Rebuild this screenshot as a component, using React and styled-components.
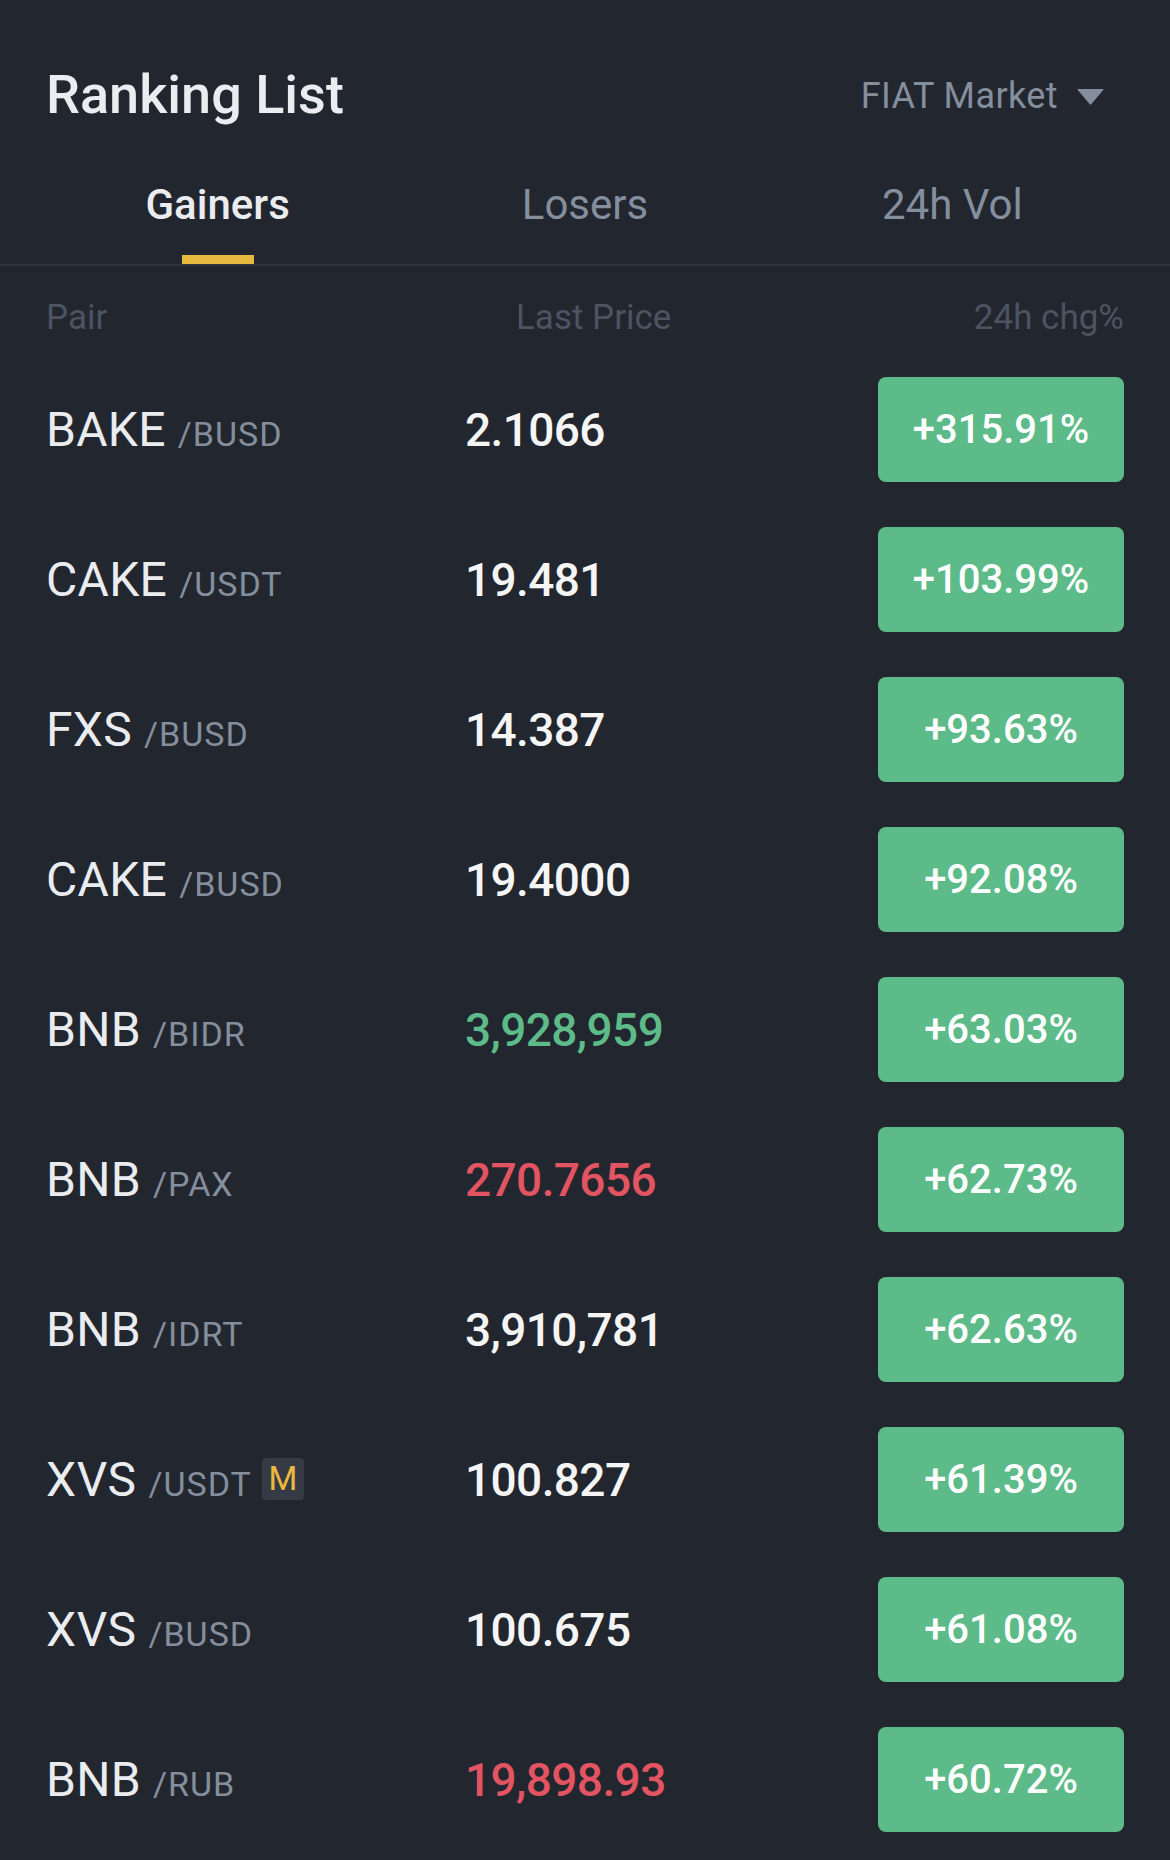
import React from 'react';
import styled, { createGlobalStyle } from 'styled-components';

const rows = [
    { base: 'BAKE', quote: 'BUSD', price: '2.1066', chg: '+315.91%' },
    { base: 'CAKE', quote: 'USDT', price: '19.481', chg: '+103.99%' },
    { base: 'FXS', quote: 'BUSD', price: '14.387', chg: '+93.63%' },
    { base: 'CAKE', quote: 'BUSD', price: '19.4000', chg: '+92.08%' },
    { base: 'BNB', quote: 'BIDR', price: '3,928,959', chg: '+63.03%', tone: 'up' },
    { base: 'BNB', quote: 'PAX', price: '270.7656', chg: '+62.73%', tone: 'down' },
    { base: 'BNB', quote: 'IDRT', price: '3,910,781', chg: '+62.63%' },
    { base: 'XVS', quote: 'USDT', price: '100.827', chg: '+61.39%', margin: true },
    { base: 'XVS', quote: 'BUSD', price: '100.675', chg: '+61.08%' },
    { base: 'BNB', quote: 'RUB', price: '19,898.93', chg: '+60.72%', tone: 'down' },
];

const tabs = ['Gainers', 'Losers', '24h Vol'];

function App() {
    return (
        <>
            <GlobalStyle />
            <Page>
                <Header>
                    <Title>Ranking List</Title>
                    <MarketPicker>
                        FIAT Market
                        <svg width="27" height="17" viewBox="0 0 27 17">
                            <path d="M1 1 L26 1 Q27 1 26.2 2 L14.5 16 Q13.5 17 12.5 16 L0.8 2 Q0 1 1 1 Z" fill="#848E9C" />
                        </svg>
                    </MarketPicker>
                </Header>

                <Tabs>
                    {tabs.map((t, i) => (
                        <Tab key={t} $active={i === 0}>
                            <span>{t}</span>
                            <i />
                        </Tab>
                    ))}
                </Tabs>

                <ColumnHead>
                    <span>Pair</span>
                    <span className="price">Last Price</span>
                    <span className="chg">24h chg%</span>
                </ColumnHead>

                <List>
                    {rows.map((r, i) => (
                        <Row key={i}>
                            <PairCell>
                                <PairName>
                                    <Base>{r.base}</Base>
                                    <Quote>/{r.quote}</Quote>
                                </PairName>
                                {r.margin && <MarginTag>M</MarginTag>}
                            </PairCell>
                            <Price $tone={r.tone}>{r.price}</Price>
                            <Change>{r.chg}</Change>
                        </Row>
                    ))}
                </List>
            </Page>
        </>
    );
}

const GlobalStyle = createGlobalStyle`
    html, body {
        margin: 0;
        padding: 0;
        background: #22262f;
    }
    body {
        font-family: Roboto, "Liberation Sans", sans-serif;
        -webkit-font-smoothing: antialiased;
    }
`;

const Page = styled.div`
    width: 1170px;
    min-height: 1860px;
    background: #22262f;
    color: #eaecef;
`;

const Header = styled.div`
    display: flex;
    align-items: center;
    justify-content: space-between;
    padding: 58px 66px 0 46px;
    height: 74px;
`;

const Title = styled.h1`
    margin: 0;
    font-size: 54px;
    font-weight: 500;
    line-height: 74px;
    color: #eaecef;
`;

const MarketPicker = styled.div`
    display: flex;
    align-items: center;
    gap: 19px;
    font-size: 36px;
    letter-spacing: 0.4px;
    color: #848e9c;
    line-height: 40px;
    padding-top: 2px;
`;

const Tabs = styled.div`
    display: grid;
    grid-template-columns: repeat(3, 1fr);
    height: 132px;
    padding: 0 34px;
    border-bottom: 2px solid #2e333c;
`;

const Tab = styled.div`
    display: flex;
    flex-direction: column;
    align-items: center;
    justify-content: flex-end;

    span {
        font-size: 42px;
        line-height: 48px;
        font-weight: ${p => (p.$active ? 500 : 400)};
        color: ${p => (p.$active ? '#eaecef' : '#848e9c')};
        margin-bottom: 26px;
    }

    i {
        display: block;
        width: 72px;
        height: 9px;
        background: ${p => (p.$active ? '#e8b93f' : 'transparent')};
    }
`;

const ColumnHead = styled.div`
    display: grid;
    grid-template-columns: 419px 1fr auto;
    align-items: center;
    padding: 32px 46px 39px 46px;
    font-size: 35px;
    line-height: 40px;
    color: #4c5361;

    .price {
        padding-left: 51px;
    }
    .chg {
        text-align: right;
    }
`;

const List = styled.div`
    display: flex;
    flex-direction: column;
    gap: 45px;
    padding: 0 46px;
`;

const Row = styled.div`
    display: grid;
    grid-template-columns: 419px 1fr 246px;
    align-items: center;
    height: 105px;
`;

const PairCell = styled.div`
    display: flex;
    align-items: center;
    gap: 10px;
`;

const PairName = styled.div`
    display: flex;
    align-items: baseline;
    gap: 12px;
`;

const Base = styled.span`
    font-size: 48px;
    letter-spacing: 0.3px;
    color: #eaecef;
`;

const Quote = styled.span`
    font-size: 34px;
    letter-spacing: 1px;
    color: #848e9c;
`;

const MarginTag = styled.span`
    display: inline-flex;
    align-items: center;
    justify-content: center;
    width: 42px;
    height: 42px;
    border-radius: 4px;
    background: #353a45;
    color: #ecb93f;
    font-size: 33px;
    margin-top: -2px;
`;

const Price = styled.span`
    font-size: 46px;
    font-weight: 500;
    letter-spacing: -0.6px;
    color: ${p => (p.$tone === 'up' ? '#5dba89' : p.$tone === 'down' ? '#e25462' : '#f5f5f5')};
`;

const Change = styled.span`
    display: flex;
    align-items: center;
    justify-content: center;
    height: 105px;
    border-radius: 8px;
    background: #5dba89;
    color: #ffffff;
    font-size: 40px;
    font-weight: 500;
`;

export default App;
